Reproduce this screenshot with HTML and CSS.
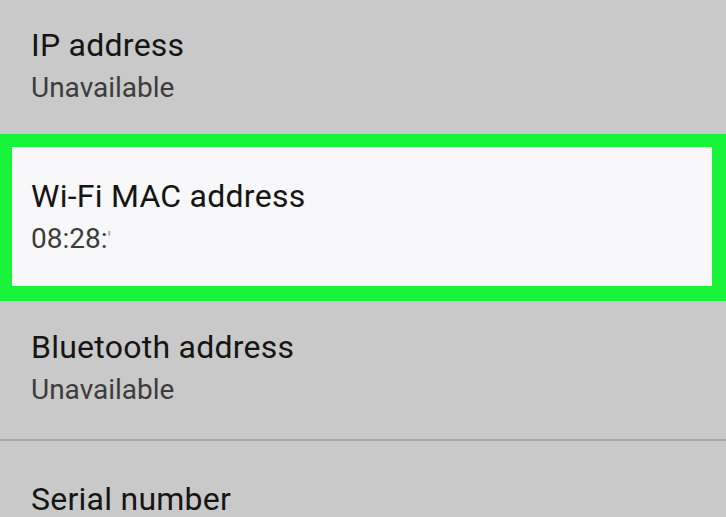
FILE: index.html
```html
<!DOCTYPE html>
<html lang="en">
<head>
    <meta charset="UTF-8">
    <meta name="viewport" content="width=device-width, initial-scale=1.0">
    <title>Status</title>
    <link rel="stylesheet" href="styles.css">
</head>
<body>
    <!-- Device status list -->
    <div class="list">
        <div class="item item-first">
            <div class="title">IP address</div>
            <div class="summary">Unavailable</div>
        </div>

        <!-- Highlighted row -->
        <div class="highlight">
            <div class="item item-selected">
                <div class="title">Wi-Fi MAC address</div>
                <div class="summary">08:28:<span class="cut">'</span></div>
            </div>
        </div>

        <div class="item item-divided">
            <div class="title">Bluetooth address</div>
            <div class="summary">Unavailable</div>
        </div>

        <div class="item item-last">
            <div class="title">Serial number</div>
        </div>
    </div>
</body>
</html>
```

FILE: styles.css
```css
body {
    font-family: Roboto, "Noto Sans", sans-serif;
    background-color: #c9c9c9;
    margin: 0;
    padding: 0;
    overflow: hidden;
}

.list {
    width: 726px;
}

/* List rows */
.item {
    padding: 0 31px;
}

.title {
    font-size: 32px;
    line-height: 40px;
    letter-spacing: 0.25px;
    color: #151515;
}

.summary {
    font-size: 28px;
    line-height: 36px;
    margin-top: 5px;
    color: #3c3c3c;
}

.item-first {
    padding-top: 25px;
    padding-bottom: 28px;
}

/* Green frame round the selected row */
.highlight {
    border-style: solid;
    border-color: #17f43a;
    border-width: 13px 14px 15px 12px;
}

.item-selected {
    background-color: #f8f7f9;
    padding-top: 29px;
    padding-bottom: 29px;
    padding-left: 19px;
}

.cut {
    color: #9a9a9a;
    font-size: 20px;
    vertical-align: top;
}

.item-divided {
    padding-top: 26px;
    padding-bottom: 31px;
    border-bottom: 2px solid #a9a9a9;
}

.item-last {
    padding-top: 38px;
}
```
